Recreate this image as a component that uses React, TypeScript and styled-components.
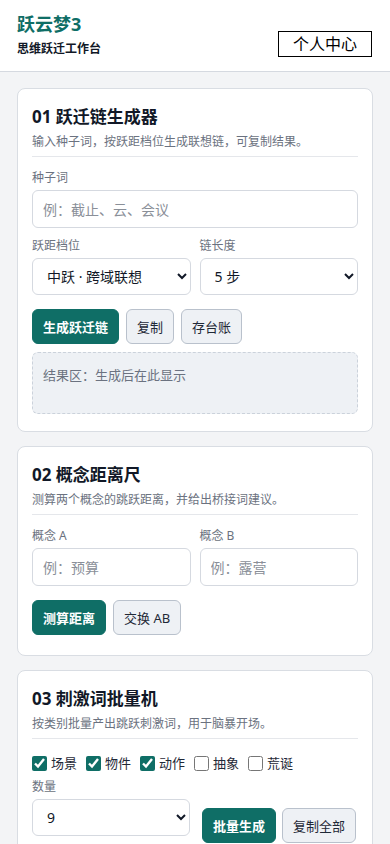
import React from 'react'
import styled, { createGlobalStyle } from 'styled-components'

const GlobalStyle = createGlobalStyle`
  * { box-sizing: border-box; }
  body {
    margin: 0;
    background: #f3f4f6;
    font-family: "Noto Sans", "Noto Sans CJK SC", sans-serif;
    color: #1f2937;
  }
`

const categories: [string, boolean][] = [
  ['场景', true],
  ['物件', true],
  ['动作', true],
  ['抽象', false],
  ['荒诞', false],
]

const App = () => {
  return (
    <>
      <GlobalStyle />
      <Header>
        <Brand>
          <Logo>跃云梦3</Logo>
          <Tagline>思维跃迁工作台</Tagline>
        </Brand>
        <ProfileButton>个人中心</ProfileButton>
      </Header>

      <Main>
        <Card>
          <CardTitle>01 跃迁链生成器</CardTitle>
          <CardDesc>输入种子词，按跃距档位生成联想链，可复制结果。</CardDesc>
          <Field>
            <Label>种子词</Label>
            <TextInput placeholder="例：截止、云、会议" />
          </Field>
          <TwoCol>
            <Field>
              <Label>跃距档位</Label>
              <Select defaultValue="mid">
                <option value="mid">中跃 · 跨域联想</option>
              </Select>
            </Field>
            <Field>
              <Label>链长度</Label>
              <Select defaultValue="5">
                <option value="5">5 步</option>
              </Select>
            </Field>
          </TwoCol>
          <ButtonRow>
            <Button $primary>生成跃迁链</Button>
            <Button>复制</Button>
            <Button>存台账</Button>
          </ButtonRow>
          <ResultBox>结果区：生成后在此显示</ResultBox>
        </Card>

        <Card>
          <CardTitle>02 概念距离尺</CardTitle>
          <CardDesc>测算两个概念的跳跃距离，并给出桥接词建议。</CardDesc>
          <TwoCol>
            <Field>
              <Label>概念 A</Label>
              <TextInput placeholder="例：预算" />
            </Field>
            <Field>
              <Label>概念 B</Label>
              <TextInput placeholder="例：露营" />
            </Field>
          </TwoCol>
          <ButtonRow>
            <Button $primary>测算距离</Button>
            <Button>交换 AB</Button>
          </ButtonRow>
        </Card>

        <Card>
          <CardTitle>03 刺激词批量机</CardTitle>
          <CardDesc>按类别批量产出跳跃刺激词，用于脑暴开场。</CardDesc>
          <CheckRow>
            {categories.map(([name, on]) => (
              <CheckItem key={name}>
                <input type="checkbox" defaultChecked={on} />
                {name}
              </CheckItem>
            ))}
          </CheckRow>
          <BatchRow>
            <Field>
              <Label>数量</Label>
              <Select defaultValue="9">
                <option value="9">9</option>
              </Select>
            </Field>
            <BatchActions>
              <Button $primary>批量生成</Button>
              <Button>复制全部</Button>
            </BatchActions>
          </BatchRow>
        </Card>
      </Main>
    </>
  )
}

export default App

const Header = styled.header`
  height: 72px;
  background: #fff;
  border-bottom: 1px solid #d5d9e0;
  display: flex;
  justify-content: space-between;
  align-items: flex-end;
  padding: 0 18px 14px 17px;
`
const Brand = styled.div`
  display: flex;
  flex-direction: column;
  gap: 5px;
`
const Logo = styled.h1`
  margin: 0;
  font-size: 18px;
  line-height: 24px;
  font-weight: 700;
  color: #0f6e66;
`
const Tagline = styled.p`
  margin: 0;
  font-size: 12px;
  line-height: 16px;
  font-weight: 700;
  color: #111827;
`
const ProfileButton = styled.button`
  width: 94px;
  height: 26px;
  background: #fff;
  border: 1px solid #000;
  border-radius: 0;
  font-family: inherit;
  font-size: 16px;
  color: #000;
  padding: 0;
  line-height: 1;
`
const Main = styled.main`
  padding: 16px 17px;
  display: flex;
  flex-direction: column;
  gap: 14px;
`
const Card = styled.section`
  background: #fff;
  border: 1px solid #d9dde3;
  border-radius: 8px;
  padding: 16px 14px 17px;
  display: flex;
  flex-direction: column;
`
const CardTitle = styled.h2`
  margin: 0;
  font-size: 17px;
  line-height: 24px;
  font-weight: 700;
  color: #111827;
`
const CardDesc = styled.p`
  margin: 0 0 12px;
  padding: 4px 0 5px;
  font-size: 12px;
  line-height: 18px;
  color: #6b7280;
  border-bottom: 1px solid #e5e7eb;
`
const Field = styled.div`
  display: flex;
  flex-direction: column;
  gap: 4px;
  min-width: 0;
`
const Label = styled.label`
  font-size: 12px;
  line-height: 17px;
  color: #6b7280;
`
const TextInput = styled.input`
  height: 38px;
  border: 1px solid #d5d9e0;
  border-radius: 6px;
  padding: 0 10px;
  font-family: inherit;
  font-size: 14px;
  color: #1f2937;
  background: #fff;
  &::placeholder { color: #8a8f98; }
`
const Select = styled.select`
  height: 37px;
  border: 1px solid #d5d9e0;
  border-radius: 6px;
  padding: 0 10px;
  font-family: inherit;
  font-size: 14px;
  color: #111827;
  background: #fff;
`
const TwoCol = styled.div`
  display: grid;
  grid-template-columns: repeat(2, minmax(0, 1fr));
  gap: 9px;
  margin-top: 9px;

  &:nth-child(3) { margin-top: 0; }
`
const ButtonRow = styled.div`
  display: flex;
  gap: 7px;
  margin: 14px 0 3px;
`
const Button = styled.button<{ $primary?: boolean }>`
  height: 35px;
  padding: 0 10px;
  border-radius: 6px;
  font-family: inherit;
  font-size: 13px;
  font-weight: ${p => (p.$primary ? 700 : 400)};
  color: ${p => (p.$primary ? '#fff' : '#1f2937')};
  background: ${p => (p.$primary ? '#0f6e66' : '#eef1f5')};
  border: 1px solid ${p => (p.$primary ? '#0f6e66' : '#b9c1cc')};
  white-space: nowrap;
`
const ResultBox = styled.div`
  margin-top: 5px;
  height: 62px;
  background: #eef1f5;
  border: 1px dashed #cbd2db;
  border-radius: 6px;
  padding: 13px 10px;
  font-size: 13px;
  line-height: 18px;
  color: #6b7280;
`
const CheckRow = styled.div`
  display: flex;
  flex-wrap: wrap;
  gap: 9px;
  margin-top: 3px;
`
const CheckItem = styled.label`
  display: flex;
  align-items: center;
  gap: 4px;
  font-size: 13px;
  line-height: 18px;
  color: #1f2937;

  input {
    margin: 0;
    width: 15px;
    height: 15px;
    accent-color: #0f6e66;
  }
`
const BatchRow = styled.div`
  display: grid;
  grid-template-columns: 158px auto;
  gap: 12px;
  margin-top: 6px;
  align-items: start;
`
const BatchActions = styled.div`
  display: flex;
  gap: 6px;
  padding-top: 30px;
`
